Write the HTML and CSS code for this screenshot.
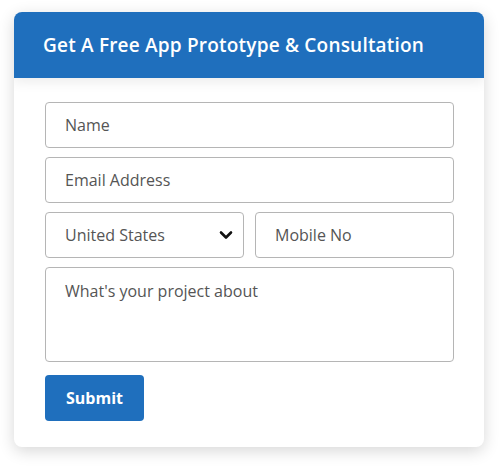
FILE: index.html
```html
<!DOCTYPE html>
<html>
<head>
<meta charset="utf-8">
<link rel="stylesheet" href="styles.css">
</head>
<body>
<div class="card">
  <div class="card-head">Get A Free App Prototype &amp; Consultation</div>
  <form class="card-body">
    <input class="field" type="text" placeholder="Name">
    <input class="field" type="text" placeholder="Email Address">
    <div class="row">
      <div class="select">
        <span>United States</span>
        <svg width="14" height="10" viewBox="0 0 14 10"><path d="M2 2.5 L7 7.5 L12 2.5" fill="none" stroke="#111" stroke-width="2.6" stroke-linecap="round" stroke-linejoin="round"/></svg>
      </div>
      <input class="field" type="text" placeholder="Mobile No">
    </div>
    <textarea class="field area" placeholder="What's your project about"></textarea>
    <div><button class="btn" type="button">Submit</button></div>
  </form>
</div>
</body>
</html>
```
FILE: styles.css
```css
* { box-sizing: border-box; }
html, body { margin: 0; background: #fff; }
body { padding: 12px 20px 27px 14px; font-family: "Open Sans", "Liberation Sans", sans-serif; }
.card {
  width: 470px;
  height: 435px;
  background: #fff;
  border-radius: 8px;
  box-shadow: 0 4px 16px rgba(0,0,0,0.16);
  overflow: hidden;
}
.card-head {
  height: 66px;
  background: #1f6fbd;
  color: #fff;
  font-size: 19px;
  font-weight: 600;
  letter-spacing: 0.2px;
  padding-left: 29px;
  display: flex;
  align-items: center;
  box-shadow: 0 4px 12px rgba(0,0,0,0.08);
  position: relative;
}
.card-body {
  margin: 0;
  padding: 24px 30px 0 31px;
  display: flex;
  flex-direction: column;
  gap: 9px;
}
.field {
  display: block;
  width: 100%;
  height: 46px;
  border: 1px solid #b5b5b5;
  border-radius: 4px;
  padding: 0 19px;
  font-family: inherit;
  font-size: 16px;
  color: #444;
  outline: none;
  background: #fff;
}
.field::placeholder { color: #555; }
.row { display: grid; grid-template-columns: 1fr 1fr; gap: 11px; }
.row > * { min-width: 0; }
.select {
  height: 46px;
  border: 1px solid #b5b5b5;
  border-radius: 4px;
  padding: 0 10px 0 19px;
  display: flex;
  align-items: center;
  justify-content: space-between;
  font-size: 16px;
  color: #555;
}
.area {
  height: 95px;
  padding-top: 12px;
  resize: none;
}
.btn {
  margin-top: 4px;
  width: 99px;
  height: 46px;
  background: #1f6fbd;
  color: #fff;
  border: 0;
  border-radius: 4px;
  font-family: inherit;
  font-size: 16px;
  font-weight: 700;
}
```
